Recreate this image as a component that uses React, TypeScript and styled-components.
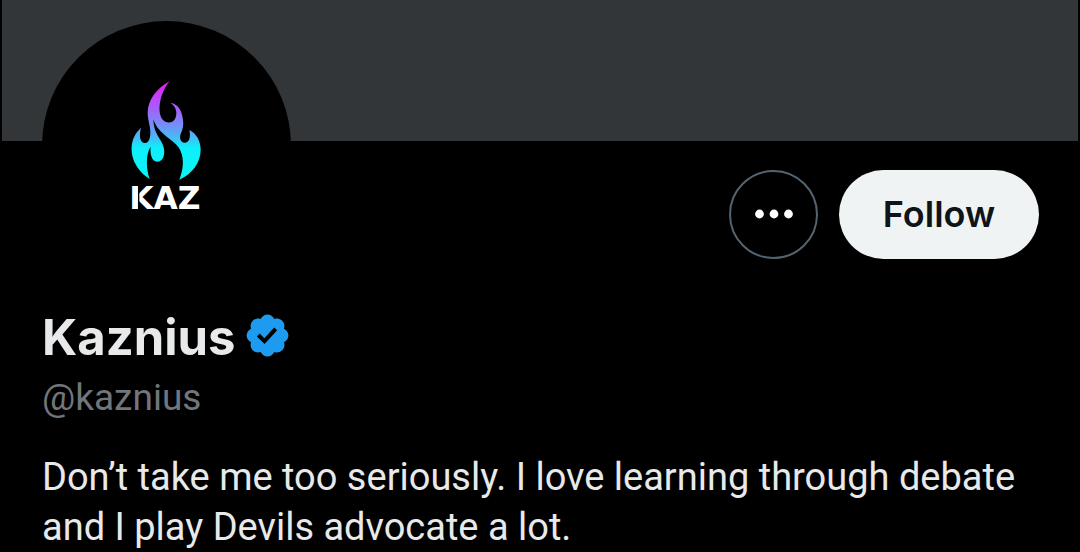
import React from "react";
import styled, { createGlobalStyle } from "styled-components";

const GlobalStyle = createGlobalStyle`
  *, *::before, *::after { box-sizing: border-box; }
  html, body { margin: 0; background: #000; }
  body { color: #e7e9ea; font-family: Roboto, "Liberation Sans", sans-serif; }
`;

const Page = styled.main`
  padding: 0 2px;
`;

const Banner = styled.div`
  height: 141px;
  background: #333639;
`;

const Content = styled.section`
  padding: 0 39px 0 40px;
`;

const TopRow = styled.div`
  display: flex;
  justify-content: space-between;
  align-items: flex-start;
`;

const Avatar = styled.a`
  display: flex;
  justify-content: center;
  width: 249px;
  height: 249px;
  margin-top: -120px;
  padding: 49px 3px 0 0;
  border-radius: 50%;
  background: #000;
`;

const Actions = styled.div`
  display: flex;
  gap: 21px;
  padding-top: 29px;
`;

const Button = styled.button<{ $primary?: boolean }>`
  display: flex;
  align-items: center;
  justify-content: center;
  width: ${(p) => (p.$primary ? "200px" : "89px")};
  height: 89px;
  padding: 0 0 2px;
  border: ${(p) => (p.$primary ? "0" : "2px solid #536471")};
  border-radius: 45px;
  background: ${(p) => (p.$primary ? "#eff3f4" : "#000")};
  color: ${(p) => (p.$primary ? "#0f1419" : "#fff")};
  font: 600 36px/50px Inter, Roboto, sans-serif;
  cursor: pointer;
`;

const NameRow = styled.div`
  display: flex;
  align-items: center;
  gap: 7px;
  margin-top: 38px;
`;

const Name = styled.h1`
  margin: 0;
  font: 700 49px/60px Inter, Roboto, sans-serif;
`;

const Badge = styled.svg`
  width: 49px;
  height: 49px;
  margin-bottom: 6px;
  fill: #1d9bf0;
`;

const Handle = styled.p`
  margin: 5px 0 0;
  color: #71767b;
  font-size: 37px;
  line-height: 50px;
`;

const Bio = styled.p`
  margin: 29px 0 0;
  font-size: 38px;
  line-height: 50px;
`;

const Logo = () => (
  <svg width="110" height="150" viewBox="0 0 330 450" role="img" aria-label="Kaz flame logo">
    <defs>
      <linearGradient id="flame" gradientUnits="userSpaceOnUse" x1="0" y1="33" x2="0" y2="328">
        <stop offset="0" stopColor="#e01cf0" />
        <stop offset="0.2" stopColor="#b94cfa" />
        <stop offset="0.42" stopColor="#7d86f8" />
        <stop offset="0.56" stopColor="#4db4f6" />
        <stop offset="0.68" stopColor="#0cf0fc" />
        <stop offset="1" stopColor="#0cf4f4" />
      </linearGradient>
    </defs>
    <path
      fill="url(#flame)"
      d="M179 33C140 55 113 90 113 128C113 150 121 165 121 188C121 205 116 219 105 219C91 219 86 200 93 173C60 203 58 247 77 283C87 303 102 316 119 327C108 297 107 250 122 230C119 257 128 275 143 275C160 275 168 250 159 226C151 204 131 190 130 148C146 197 192 206 210 239C225 269 218 302 208 329C247 312 272 277 272 239C272 213 259 190 238 180C243 203 237 218 224 218C211 218 207 203 213 189C219 176 221 164 219 149C216 122 205 102 181 98C200 110 203 132 195 147C188 160 170 161 160 151C138 128 150 68 179 33Z"
    />
    <text x="58" y="418" fill="#fff" fontFamily="DejaVu Sans" fontWeight="700" fontSize="94">
      KAZ
    </text>
    <path d="M86 348V420" stroke="#000" strokeWidth="4" />
  </svg>
);

export default function App() {
  return (
    <>
      <GlobalStyle />
      <Page>
        <Banner />
        <Content>
          <TopRow>
            <Avatar href="#photo">
              <Logo />
            </Avatar>
            <Actions>
              <Button type="button" aria-label="More">
                <svg width="40" height="12" viewBox="0 0 40 12" fill="currentColor" aria-hidden="true">
                  <circle cx="5.5" cy="6" r="4.4" />
                  <circle cx="20" cy="6" r="4.4" />
                  <circle cx="34.5" cy="6" r="4.4" />
                </svg>
              </Button>
              <Button type="button" $primary>
                Follow
              </Button>
            </Actions>
          </TopRow>
          <NameRow>
            <Name>Kaznius</Name>
            <Badge viewBox="0 0 22 22" role="img" aria-label="Verified account">
              <path d="M20.396 11c-.018-.646-.215-1.275-.57-1.816-.354-.54-.852-.972-1.438-1.246.223-.607.27-1.264.14-1.897-.131-.634-.437-1.218-.882-1.687-.47-.445-1.053-.75-1.687-.882-.633-.13-1.29-.083-1.897.14-.273-.587-.704-1.086-1.245-1.44S11.647 1.62 11 1.604c-.646.017-1.273.213-1.813.568s-.969.854-1.24 1.44c-.608-.223-1.267-.272-1.902-.14-.635.13-1.22.436-1.69.882-.445.47-.749 1.055-.878 1.688-.13.633-.08 1.29.144 1.896-.587.274-1.087.705-1.443 1.245-.356.54-.555 1.17-.574 1.817.02.647.218 1.276.574 1.817.356.54.856.972 1.443 1.245-.224.606-.274 1.263-.144 1.896.13.634.433 1.218.877 1.688.47.443 1.054.747 1.687.878.633.132 1.29.084 1.897-.136.274.586.705 1.084 1.246 1.439.54.354 1.17.551 1.816.569.647-.016 1.276-.213 1.817-.567s.972-.854 1.245-1.44c.604.239 1.266.296 1.903.164.636-.132 1.22-.447 1.68-.907.46-.46.776-1.044.908-1.681s.075-1.299-.165-1.903c.586-.274 1.084-.705 1.439-1.246.354-.54.551-1.17.569-1.816zM9.662 14.85l-3.429-3.428 1.293-1.302 2.072 2.072 4.4-4.794 1.347 1.246z" />
            </Badge>
          </NameRow>
          <Handle>@kaznius</Handle>
          <Bio>Don’t take me too seriously. I love learning through debate and I play Devils advocate a lot.</Bio>
        </Content>
      </Page>
    </>
  );
}
